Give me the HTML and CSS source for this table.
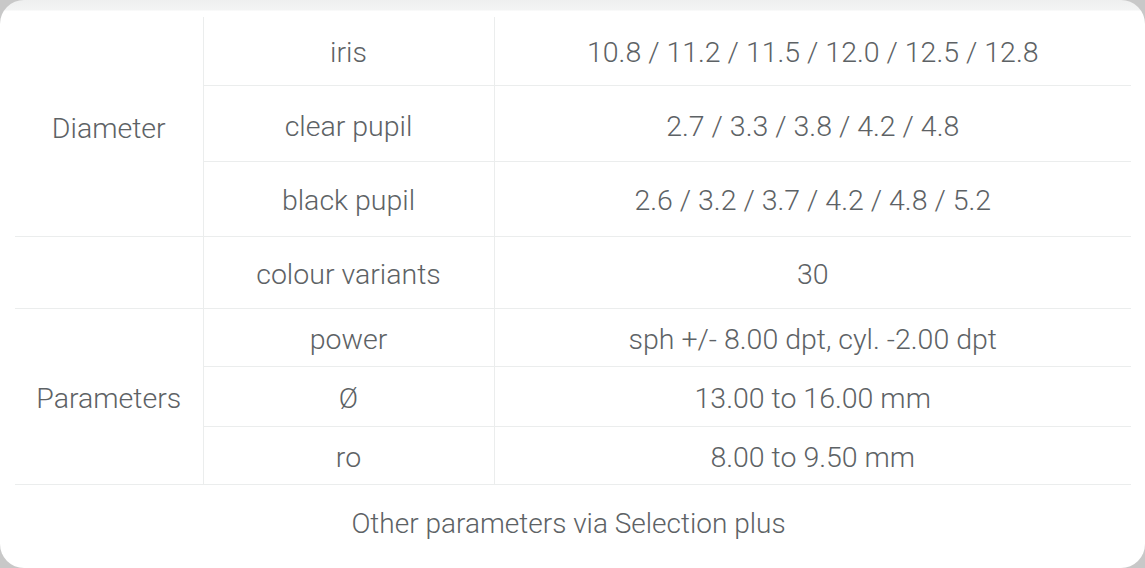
FILE: index.html
```html
<!DOCTYPE html>
<html>
<head>
<meta charset="utf-8">
<link rel="stylesheet" href="styles.css">
</head>
<body>
<div class="card">
  <table class="spec">
    <colgroup>
      <col class="c1"><col class="c2"><col class="c3">
    </colgroup>
    <tbody>
      <tr class="r1">
        <td class="group" rowspan="3">Diameter</td>
        <td class="sub">iris</td>
        <td>10.8 / 11.2 / 11.5 / 12.0 / 12.5 / 12.8</td>
      </tr>
      <tr class="r2">
        <td class="sub">clear pupil</td>
        <td>2.7 / 3.3 / 3.8 / 4.2 / 4.8</td>
      </tr>
      <tr class="r3">
        <td class="sub">black pupil</td>
        <td>2.6 / 3.2 / 3.7 / 4.2 / 4.8 / 5.2</td>
      </tr>
      <tr class="r4">
        <td class="group"></td>
        <td class="sub">colour variants</td>
        <td>30</td>
      </tr>
      <tr class="r5">
        <td class="group" rowspan="3">Parameters</td>
        <td class="sub">power</td>
        <td>sph +/- 8.00 dpt, cyl. -2.00 dpt</td>
      </tr>
      <tr class="r6">
        <td class="sub">Ø</td>
        <td>13.00 to 16.00 mm</td>
      </tr>
      <tr class="r7 last">
        <td class="sub">ro</td>
        <td>8.00 to 9.50 mm</td>
      </tr>
    </tbody>
  </table>
  <p class="note">Other parameters via Selection plus</p>
</div>
</body>
</html>
```
FILE: styles.css
```css
html, body {
  margin: 0;
  padding: 0;
  background: #c8c8c8;
}
body {
  width: 1145px;
  height: 568px;
  overflow: hidden;
}
.card {
  box-sizing: border-box;
  width: 1145px;
  height: 568px;
  border-radius: 24px;
  background: linear-gradient(to bottom, #eeefef 0, #f3f4f4 10px, #ffffff 11px, #ffffff 100%);
  padding: 17px 14px 0 15px;
  font-family: Roboto, "Noto Sans", sans-serif;
  font-weight: 300;
  font-size: 28.5px;
  color: #5d6265;
}
.spec {
  width: 1116px;
  border-collapse: collapse;
  table-layout: fixed;
}
.c1 { width: 188px; }
.c2 { width: 291px; }
.c3 { width: 637px; }
.spec td {
  padding: 4px 0 0 0;
  text-align: center;
  vertical-align: middle;
  border-bottom: 1px solid #ebeded;
  border-left: 1px solid #ebeded;
  line-height: 32px;
}
.spec td.group {
  border-left: none;
}
.r1 td { height: 64px; }
.spec .r2 td { height: 69px; padding-top: 6px; }
.r3 td { height: 70px; }
.r4 td { height: 67px; }
.r5 td { height: 53px; }
.r6 td { height: 55px; }
.r7 td { height: 53px; }
.note {
  margin: 0;
  height: 78px;
  line-height: 78px;
  text-align: center;
  padding-right: 9px;
  font-size: 28px;
}
```
